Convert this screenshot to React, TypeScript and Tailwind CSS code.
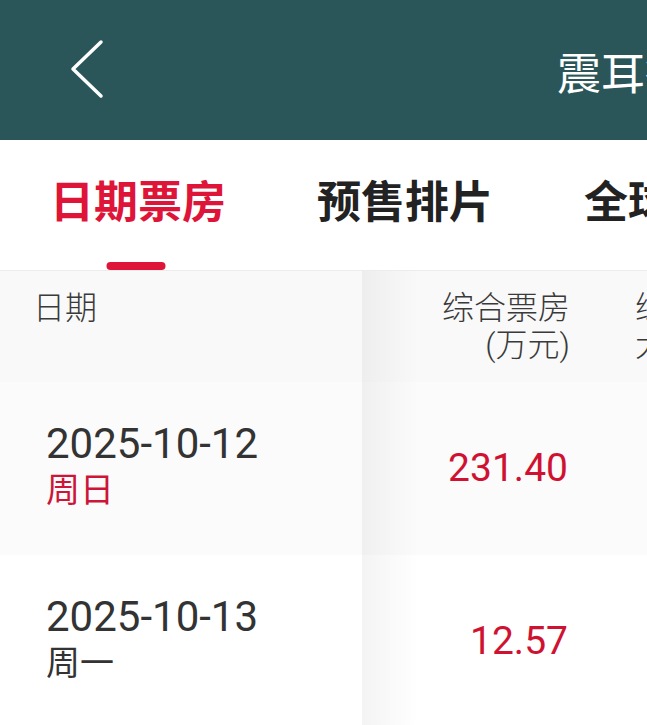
import { useState } from "react";

type Row = { date: string; week: string; weekend: boolean; box: string };

const rows: Row[] = [
  { date: "2025-10-12", week: "周日", weekend: true, box: "231.40" },
  { date: "2025-10-13", week: "周一", weekend: false, box: "12.57" }
];

const tabs = ["日期票房", "预售排片", "全球票房"];

function BackIcon() {
  return (
    <svg width="40" height="62" viewBox="0 0 40 62" fill="none">
      <path
        d="M33 3 L5 30 L33 57"
        stroke="white"
        strokeWidth="3.5"
        strokeLinecap="round"
        strokeLinejoin="round"
      />
    </svg>
  );
}

export default function App() {
  const [active, setActive] = useState(0);

  return (
    <div className="w-[647px] h-[725px] overflow-hidden bg-white font-[Roboto,'Noto_Sans_CJK_SC',sans-serif]">
      <header className="h-[140px] bg-[#2b5659] flex items-center overflow-hidden">
        <button className="ml-[68px] shrink-0 flex items-center">
          <BackIcon />
        </button>
        <h1 className="ml-[449px] mt-[10px] shrink-0 whitespace-nowrap text-[44px] leading-none text-white font-normal">
          震耳欲聋
        </h1>
      </header>

      <nav className="h-[130px] flex pl-[50px] gap-[91px] overflow-hidden whitespace-nowrap">
        {tabs.map((t, i) => (
          <button
            key={t}
            onClick={() => setActive(i)}
            className={`relative h-full shrink-0 flex items-center text-[44px] leading-none font-bold ${
              active === i ? "text-[#de1538]" : "text-[#222]"
            }`}
          >
            <span className="-mt-[5px]">{t}</span>
            {active === i && (
              <span className="absolute bottom-0 left-1/2 -translate-x-1/2 ml-[-2px] w-[59px] h-[8px] rounded-full bg-[#de1538]" />
            )}
          </button>
        ))}
      </nav>

      <div className="relative border-t border-[#ececec]">
        <div className="flex h-[111px] bg-[#f9f9f9] text-[32px] leading-[37px] font-light text-[#3a3a3a] whitespace-nowrap">
          <div className="w-[362px] shrink-0 pl-[33px] pt-[19px]">日期</div>
          <div className="w-[268px] shrink-0 pr-[60px] pt-[19px] text-right">
            <div>综合票房</div>
            <div>(万元)</div>
          </div>
          <div className="shrink-0 pl-[5px] pt-[19px]">
            <div>综合票房</div>
            <div>大盘占比</div>
          </div>
        </div>

        {rows.map((r, i) => (
          <div
            key={r.date}
            className={`flex h-[173px] items-center ${i % 2 === 0 ? "bg-[#fbfbfb]" : "bg-white"}`}
          >
            <div className="w-[362px] shrink-0 pl-[46px] -mt-[3px]">
              <div className="text-[42px] leading-[46px] text-[#333]">{r.date}</div>
              <div
                className={`text-[34px] leading-[46px] ${r.weekend ? "text-[#cc1538]" : "text-[#333]"}`}
              >
                {r.week}
              </div>
            </div>
            <div className="w-[268px] shrink-0 pr-[62px] text-right text-[39px] text-[#d01232]">
              {r.box}
            </div>
          </div>
        ))}

        <div className="absolute top-0 bottom-0 left-[362px] w-[56px] bg-linear-to-r from-black/[0.045] to-transparent pointer-events-none" />
      </div>
    </div>
  );
}
